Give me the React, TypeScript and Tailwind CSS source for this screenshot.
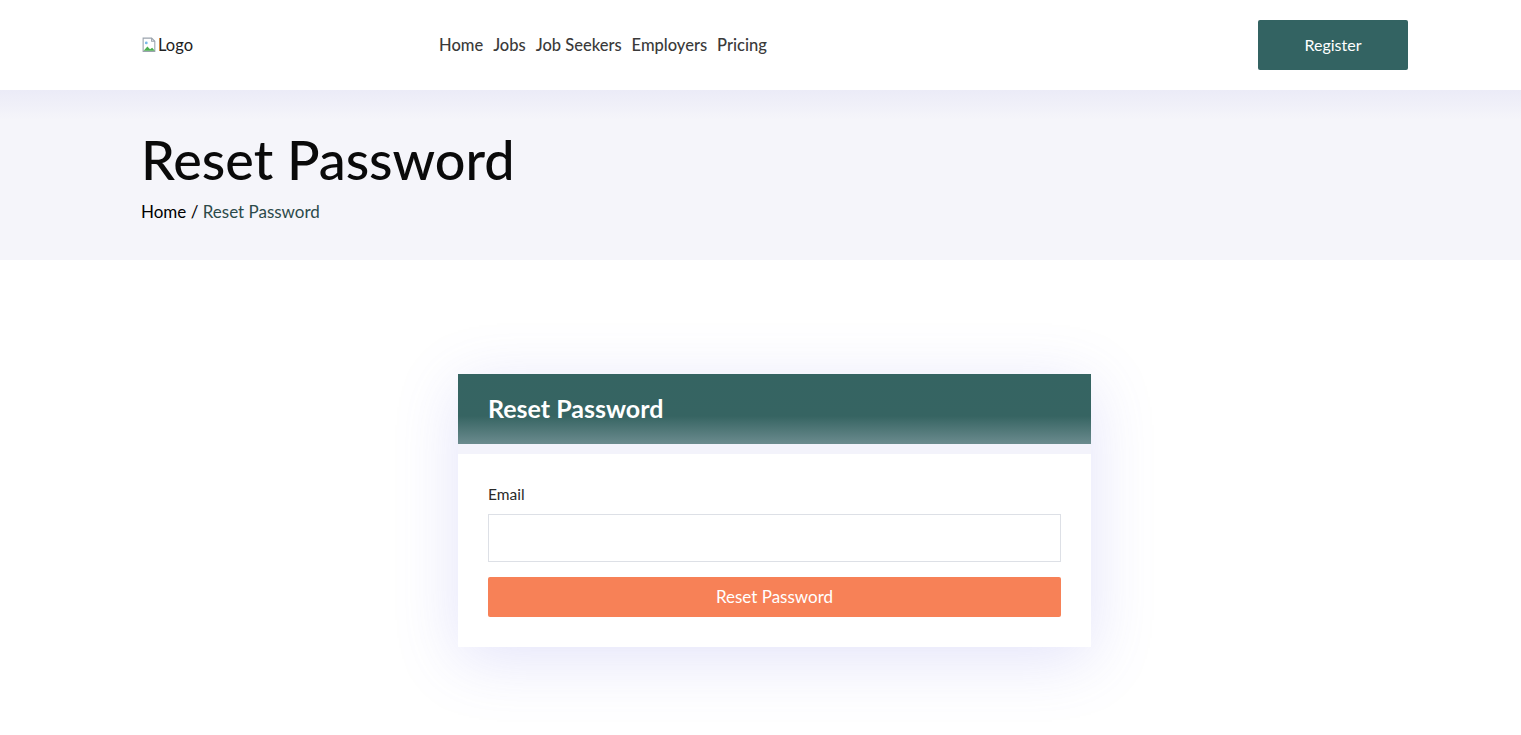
import React from "react"

const NavLinks = ["Home", "Jobs", "Job Seekers", "Employers", "Pricing"]

const BrokenImage: React.FC = () => (
    <svg width="17" height="18" viewBox="0 0 16 16">
        <path d="M2 1.5h8l3 3v9.5H2z" fill="#fff" stroke="#9aa3ad" strokeWidth="1" />
        <path d="M10 1.5v3h3" fill="none" stroke="#9aa3ad" strokeWidth="1" />
        <path d="M2.5 13.5l3.5-4 2.5 2.5 2-1.5 2.5 3z" fill="#4caf50" />
        <circle cx="5" cy="6" r="1.3" fill="#7ab8e8" />
    </svg>
)

const App: React.FC = () => {
    return (
        <div className="min-h-[735px] bg-white font-['Lato','Noto_Sans',sans-serif] text-[#333]">
            <header className="relative z-10 h-[90px] bg-white pl-[28px]">
                <div className="mx-auto flex h-full w-[1267px] items-center">
                    <div className="flex w-[298px] items-center text-[16.5px] text-[#222]">
                        <BrokenImage />
                        <span>Logo</span>
                    </div>
                    <nav className="flex items-center gap-[10px] text-[16.5px] font-medium text-[#3a3a3a]">
                        {NavLinks.map((l) => (
                            <a key={l} href="#" className="hover:text-[#336362]">{l}</a>
                        ))}
                    </nav>
                    <button className="ml-auto h-[50px] w-[150px] rounded-[2px] bg-[#336362] text-[16px] text-white">
                        Register
                    </button>
                </div>
            </header>

            <section className="h-[170px] bg-[linear-gradient(to_bottom,#ebebf7_0px,#f5f5fa_30px,#f5f5fa_100%)] pl-[28px]">
                <div className="mx-auto w-[1267px] pt-[35px]">
                    <h1 className="text-[54px] font-medium leading-[70px] text-[#0a0a0a]">Reset Password</h1>
                    <div className="mt-[4px] text-[17px]">
                        <span className="text-black">Home / </span>
                        <span className="text-[#2c4a4a]">Reset Password</span>
                    </div>
                </div>
            </section>

            <main className="flex justify-center pt-[114px] pb-[88px] pl-[28px]">
                <div className="w-[633px] bg-[#f3f3fb] shadow-[0_12px_60px_rgba(100,100,225,0.18)]">
                    <div className="flex h-[70px] items-center bg-[linear-gradient(to_bottom,#356462_0%,#366462_60%,#6b8b8e_100%)] px-[30px]">
                        <h2 className="text-[25px] font-bold text-white">Reset Password</h2>
                    </div>
                    <div className="mt-[10px] bg-white px-[30px] pt-[30px] pb-[30px]">
                        <label className="block text-[15.5px] leading-[20px] text-[#2a2a2a]">Email</label>
                        <input
                            type="email"
                            className="mt-[10px] block h-[48px] w-full border border-[#dde0e6] bg-white px-3 outline-none"
                        />
                        <button className="mt-[15px] h-[40px] w-full rounded-[2px] bg-[#f78157] text-[17px] text-white">
                            Reset Password
                        </button>
                    </div>
                </div>
            </main>
        </div>
    )
}
export default App
